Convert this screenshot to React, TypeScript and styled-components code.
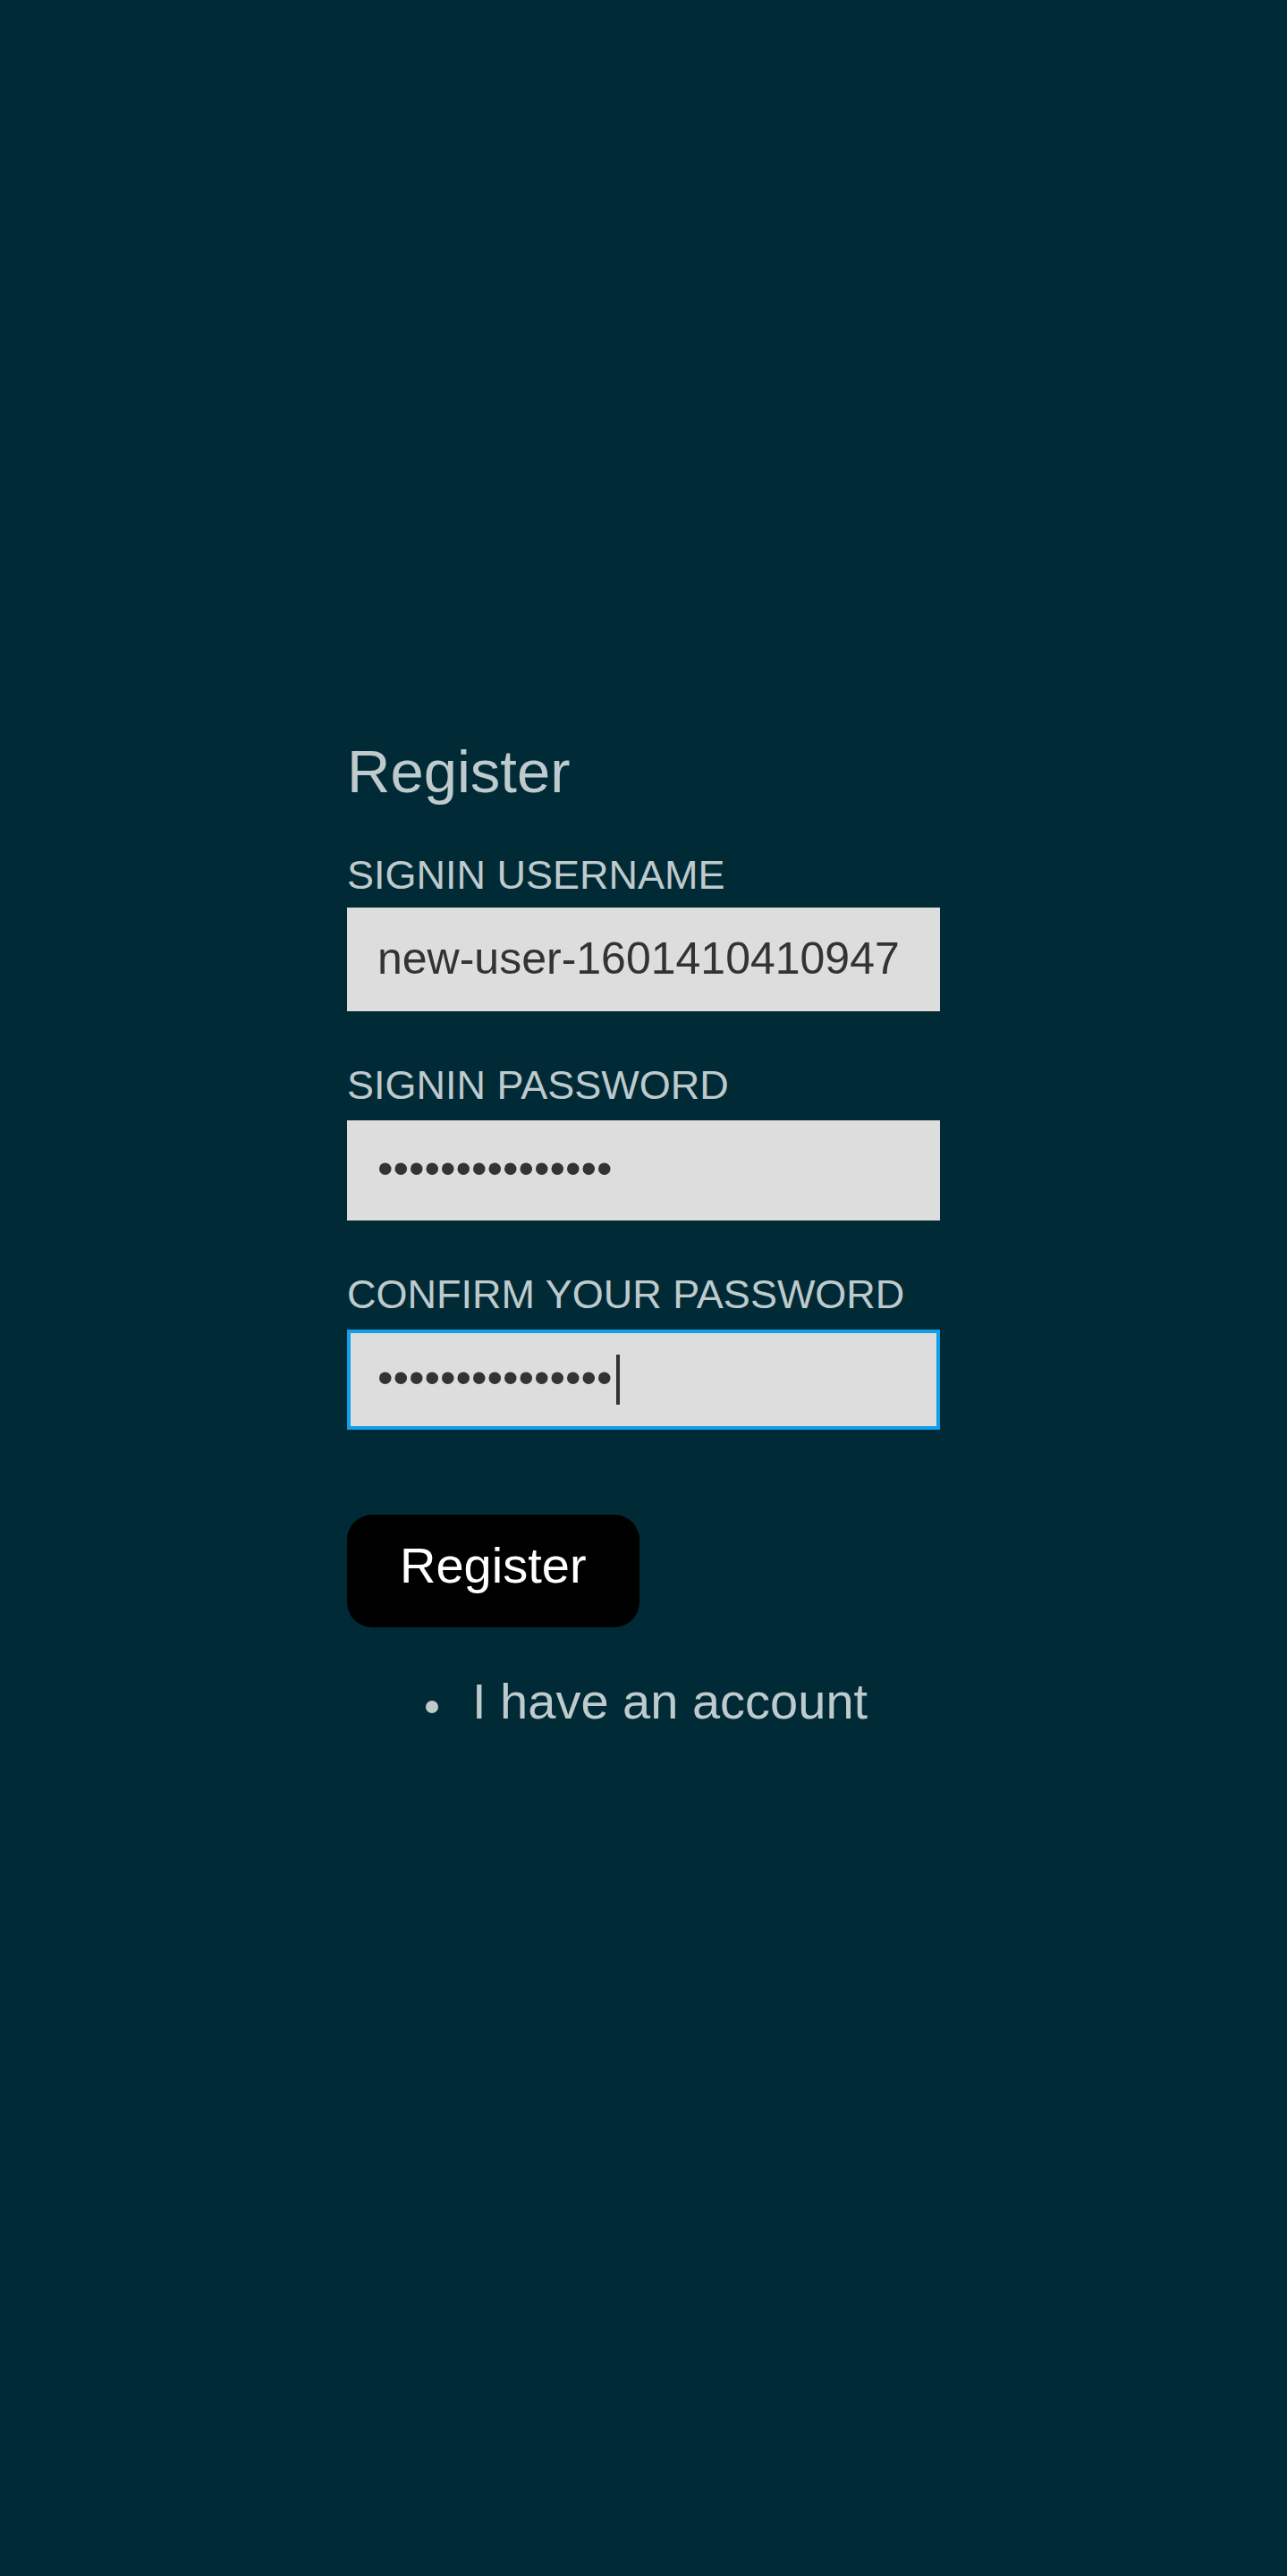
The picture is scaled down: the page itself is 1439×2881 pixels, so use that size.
import React from "react";
import styled, { createGlobalStyle } from "styled-components";

const GlobalStyle = createGlobalStyle`
  * { box-sizing: border-box; }
  body { margin: 0; background: #002b36; color: #bfcacd; font-family: "Liberation Sans", Arial, sans-serif; }
`;
const Page = styled.main`
  min-height: 100vh;
  padding-bottom: 120px;
  display: flex;
  justify-content: center;
  align-items: center;
`;
const Form = styled.form`
  width: 100%;
  max-width: 663px;
  display: flex;
  flex-direction: column;
  align-items: flex-start;
`;
const Title = styled.h1`
  margin: 0 0 48px;
  font-size: 67px;
  line-height: 80px;
  font-weight: 400;
`;
const Field = styled.div`
  width: 100%;
  margin-bottom: 55px;
`;
const Label = styled.label<{ $masked?: boolean }>`
  display: block;
  margin-bottom: ${(p) => (p.$masked ? 11 : 8)}px;
  font-size: 45px;
  line-height: 56px;
  text-transform: uppercase;
`;
const Control = styled.div`
  position: relative;
`;
const Input = styled.input`
  display: block;
  width: 100%;
  height: 116px;
  padding: 0 30px 2px;
  border: 4px solid #ddd;
  border-radius: 0;
  background: #ddd;
  color: #333;
  caret-color: transparent;
  font: 50px "Liberation Sans", Arial, sans-serif;
  outline: none;
  &[type="password"] {
    height: 112px;
    padding-bottom: 4px;
  }
  &:focus { border-color: #119eeb; }
`;
const Caret = styled.span`
  display: none;
  position: absolute;
  top: 28px;
  left: 301px;
  width: 4px;
  height: 56px;
  background: #333;
  pointer-events: none;
  ${Input}:focus + & { display: block; }
`;
const Button = styled.button`
  margin: 40px 0 51px;
  padding: 0 59px 12px;
  height: 126px;
  border: 0;
  border-radius: 28px;
  background: #000;
  color: #fff;
  font: 56px "Liberation Sans", Arial, sans-serif;
`;
const Links = styled.ul`
  margin: 0;
  padding-left: 122px;
  font-size: 45px;
  line-height: 64px;
`;
const Link = styled.a`
  padding-left: 18px;
  color: inherit;
  font-size: 56px;
  text-decoration: none;
`;

export default function App() {
  return (
    <>
      <GlobalStyle />
      <Page>
        <Form>
          <Title>Register</Title>
          <Field>
            <Label htmlFor="username">Signin username</Label>
            <Input id="username" type="text" defaultValue="new-user-1601410410947" />
          </Field>
          <Field>
            <Label htmlFor="password" $masked>Signin password</Label>
            <Input id="password" type="password" defaultValue="passwordpasswor" />
          </Field>
          <Field>
            <Label htmlFor="confirm" $masked>Confirm your password</Label>
            <Control>
              <Input id="confirm" type="password" defaultValue="passwordpasswor" autoFocus />
              <Caret />
            </Control>
          </Field>
          <Button type="button">Register</Button>
          <Links>
            <li><Link href="#signin">I have an account</Link></li>
          </Links>
        </Form>
      </Page>
    </>
  );
}
